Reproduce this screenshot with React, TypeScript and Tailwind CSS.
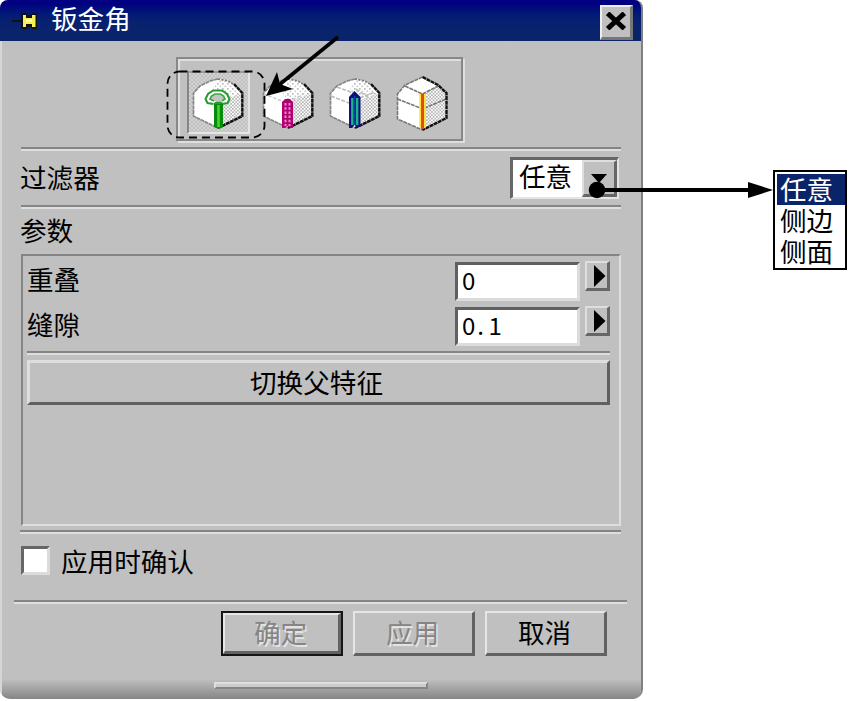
import type { ReactNode } from 'react';

const listItems = ["任意", "侧边", "侧面"];

const params = [
  { label: "重叠", value: "0" },
  { label: "缝隙", value: "0.1" },
];

function Divider({ className = "" }: { className?: string }) {
  return <div className={`h-[4px] shrink-0 border-t-2 border-b-2 border-t-[#858585] border-b-[#dedede] ${className}`}></div>;
}

// rounded sheet metal corner, the drawing in front of it is passed as children
function Cube({ children }: { children: ReactNode }) {
  return (
    <svg viewBox="0 0 52 54" className="w-[52px] h-[54px] shrink-0">
      <path d="M1.5 15 L8 8 L18 3 L26 1 L35 3 L44 8 L50 15 V38 L26 50 L1.5 38 Z" fill="#fff" />
      <path d="M26 24 L50 14 V38 L26 50 Z" fill="url(#dither)" />
      <path d="M26 1 L35 3 L44 8 L50 15 L27 24 L20 14 Z" fill="url(#ditherLight)" />
      <path d="M26 1 L18 3 L8 8 L1.5 15 V38 L26 50" fill="none" stroke="#858585" strokeWidth="1.7" strokeDasharray="4 0.6" />
      <path d="M26 1 L36 3 L44 8" fill="none" stroke="#777" strokeWidth="1.7" strokeDasharray="2 1.5" />
      <path d="M42 6 L50.3 15 V38 L26 50" fill="none" stroke="#111" strokeWidth="2.4" strokeDasharray="4 0.5" />
      {children}
    </svg>
  );
}

function DialogButton({ children, primary, disabled }: { children: ReactNode; primary?: boolean; disabled?: boolean }) {
  return (
    <div className={`w-[122px] h-[45px] ${primary ? "border-2 border-[#151515]" : ""}`}>
      <button
        className={`w-full h-full flex items-center justify-center pr-[2px] pb-[2px] border-t-2 border-l-2 border-r-[3px] border-b-[3px] border-t-[#e6e6e6] border-l-[#e6e6e6] border-r-[#626262] border-b-[#626262] ${disabled ? "text-[#858585] [text-shadow:1.5px_1.5px_0_#e4e4e4]" : "text-black"}`}
      >
        {children}
      </button>
    </div>
  );
}

export default function App() {
  return (
    <div className="relative flex w-[855px] h-[701px] bg-white overflow-hidden text-black text-[26.6px] leading-[32px] font-normal [font-family:'Noto_Sans_CJK_SC',sans-serif]">
      <svg className="absolute w-0 h-0">
        <defs>
          <pattern id="dither" width="3.34" height="3.34" patternUnits="userSpaceOnUse">
            <rect width="3.34" height="3.34" fill="#fff" />
            <rect width="1.67" height="1.67" fill="#b5b5b5" />
            <rect x="1.67" y="1.67" width="1.67" height="1.67" fill="#b5b5b5" />
          </pattern>
          <pattern id="ditherLight" width="5" height="5" patternUnits="userSpaceOnUse">
            <rect width="5" height="5" fill="#fff" />
            <rect width="1.67" height="1.67" fill="#bbb" />
            <rect x="2.5" y="2.5" width="1.67" height="1.67" fill="#ccc" />
          </pattern>
        </defs>
      </svg>

      {/* Dialog */}
      <div className="w-[643px] h-[699px] shrink-0 flex flex-col bg-[#c0c0c0] rounded-t-[8px] rounded-b-[10px] overflow-hidden border-r-2 border-r-[#808080]">
        <div className="h-[41px] shrink-0 flex items-center bg-gradient-to-b from-[#000080] from-10% via-[#08216f] via-50% to-[#0a246a] text-white">
          <svg viewBox="0 0 25 18" className="w-[25px] h-[18px] ml-[12px]">
            <path d="M0 9H10" stroke="#111" strokeWidth="2" />
            <path d="M9 1h5.5l2 2h2l2-2H25v16h-4.5l-2-2h-2l-2 2H9Z" fill="#111" />
            <path d="M11 3h3v3h6V3h3.500v12H20v-3h-6v3h-3Z" fill="#f4ef57" />
            <path d="M14 7.5h6v2h-6Z" fill="#fffbc0" />
          </svg>
          <span className="ml-[14px] -mt-[5px]">钣金角</span>
          <button className="ml-auto mr-[8px] mt-[4px] w-[33px] h-[35px] flex items-center justify-center bg-[#c0c0c0] border-t-2 border-l-2 border-r-[3px] border-b-[3px] border-t-[#eee] border-l-[#eee] border-r-[#777] border-b-[#777]">
            <svg viewBox="0 0 20 18" className="w-[20px] h-[18px] mb-[2px]">
              <path d="M3.5 3 L16.5 15 M16.5 3 L3.5 15" stroke="#000" strokeWidth="5" strokeLinecap="square" />
            </svg>
          </button>
        </div>

        <div className="flex-1 flex flex-col border-l-2 border-l-[#d6d6d6] bg-[linear-gradient(to_bottom,#c0c0c0_638px,#858585_658px)]">
          <div className="w-[287px] h-[84px] mt-[16px] ml-[174px] p-[2px] border-2 border-[#888] shadow-[inset_2px_2px_0_#dedede,2px_2px_0_#dedede] flex">
            <div className="ml-[7px] mt-[10px] w-[63px] h-[63px] pl-[3px] pt-[5px] border-2 border-t-[#999] border-l-[#858585] border-r-[#e4e4e4] border-b-[#e4e4e4] bg-[repeating-conic-gradient(#c0c0c0_0_25%,#d2d2d2_0_50%)] bg-[length:4px_4px]">
              <Cube>
                <path d="M21.5 26 L15.5 25 L13.5 21 L16 16 L21 12.5 H30 L35 16 L37.5 21 L35.5 25 L30 26" fill="#fff" stroke="#239b2d" strokeWidth="2" />
                <path d="M22 23 L18 21 L19.5 18 L23 16 H28.5 L31.5 18 L33 21 L30 23" fill="#c4c4c4" stroke="#35aa3d" strokeWidth="1.7" />
                <path d="M22 29 V25 L24 23.5 H29 L31 25 V29" fill="#239b2d" />
                <path d="M22 26 H31 V49 L26.5 51 L22 49 Z" fill="#078b0c" />
                <path d="M26.5 27 V49" stroke="#4bd22c" strokeWidth="2.6" />
              </Cube>
            </div>
            <div className="ml-[12px] mt-[17px] flex gap-[15px]">
              <Cube>
                <path d="M2 16 L20 23 M26 15 V23 M31 22 L43 15" fill="none" stroke="#c8c8c8" strokeWidth="1.5" strokeDasharray="3 2" />
                <path d="M20 24 L23 21 H28 L31 24 V50 H28 L25.5 48 L23 50 H20 Z" fill="#b00078" />
                <path d="M23.5 25 V48 M27.5 25 V48" stroke="#f58ab0" strokeWidth="2" strokeDasharray="2.5 1.7" />
              </Cube>
              <Cube>
                <path d="M2 18 L20 25 M8 9 L24 15 M31 20 L46 14 M27 11 L40 20" fill="none" stroke="#bbb" strokeWidth="1.6" strokeDasharray="4 1.5" />
                <path d="M20 19 L25.5 13 L31.5 19 V49 H28 L25.5 47 L23 50 H20 Z" fill="#10107c" />
                <path d="M23.3 20 V47 M28.2 20 V47" stroke="#16b58a" strokeWidth="2.4" />
                <path d="M25.7 18 V47" stroke="#0a3fa0" strokeWidth="1.6" />
              </Cube>
              <svg viewBox="0 0 53 56" className="w-[53px] h-[56px] -mt-[2px]">
                <path d="M26.5 1 L42 9 L50 16 V42 L26.5 54 L1.5 43 V18 L9 9 Z" fill="#fff" />
                <path d="M26.5 18 L43 9 L51 17 V42 L26.5 54 Z" fill="url(#dither)" />
                <path d="M26.5 1 L9 9 L1.5 18 V43 L26.5 54 M9 10 L26.5 18 L42 10 M1.5 23 L26.5 33 L50 23" fill="none" stroke="#777" strokeWidth="1.6" strokeDasharray="4 0.8" />
                <path d="M26.5 1 L42 9 L50.5 17 V42 L26.5 54" fill="none" stroke="#111" strokeWidth="2.4" strokeDasharray="4 0.6" />
                <path d="M26.5 18 V52" stroke="#ffe23b" strokeWidth="6.5" />
                <path d="M26.5 18 V53" stroke="#e44b14" strokeWidth="3" />
              </svg>
            </div>
          </div>

          <Divider className="mt-[6px] ml-[19px] mr-[20px]" />

          <div className="h-[54px] shrink-0 flex items-center justify-between pl-[18px] pr-[22px]">
            <span className="pb-[3px]">过滤器</span>
            <div className="w-[109px] h-[42px] flex border-t-[3px] border-l-[3px] border-r-2 border-b-2 border-t-[#666] border-l-[#666] border-r-[#e4e4e4] border-b-[#e4e4e4] bg-white">
              <span className="w-[69px] pl-[6px]">任意</span>
              <div className="flex-1 flex justify-center pt-[12px] bg-[#c0c0c0] border-t-2 border-l-2 border-r-[3px] border-b-[3px] border-t-[#dedede] border-l-[#dedede] border-r-[#666] border-b-[#666]">
                <svg viewBox="0 0 16 10" className="w-[16px] h-[10px]">
                  <path d="M0 0 H16 L8 9 Z" />
                </svg>
              </div>
            </div>
          </div>

          <Divider className="ml-[19px] mr-[20px]" />

          <div className="ml-[18px] mt-[5px] h-[40px] leading-[32px]">参数</div>

          {/* Parameters group */}
          <div className="ml-[19px] mr-[20px] h-[272px] shrink-0 pl-[4px] pr-[9px] pt-[6px] border-2 border-t-[#858585] border-l-[#858585] border-r-[#dedede] border-b-[#dedede]">
            {params.map((param) => (
              <div key={param.label} className="h-[45px] flex items-start">
                <span className="mt-px">{param.label}</span>
                <div className="ml-auto w-[125px] h-[39px] pl-[4px] bg-white border-[3px] border-t-[#606060] border-l-[#606060] border-r-[#dcdcdc] border-b-[#dcdcdc] flex text-[24px] leading-[30px]">
                  {param.value.split("").map((char, i) => (
                    <span key={i} className={`w-[13.3px] ${char === "." ? "pl-[2px]" : ""}`}>{char}</span>
                  ))}
                </div>
                <div className="ml-[5px] w-[25px] h-[30px] -mt-px flex items-center pl-[6px] border-t-2 border-l-2 border-r-[3px] border-b-[3px] border-t-[#dedede] border-l-[#dedede] border-r-[#666] border-b-[#666]">
                  <svg viewBox="0 0 13 22" className="w-[13px] h-[22px]">
                    <path d="M1 0 L12.5 11 L1 22 Z" />
                  </svg>
                </div>
              </div>
            ))}
            <Divider className="-mt-px" />
            <button className="mt-[5px] w-full h-[45px] flex items-center justify-center pr-[4px] pb-[2px] border-[3px] border-t-[#dedede] border-l-[#dedede] border-r-[#606060] border-b-[#606060]">
              切换父特征
            </button>
          </div>

          <Divider className="mt-[4px] ml-[18px] mr-[20px]" />

          <div className="h-[66px] shrink-0 flex pt-[12px] pl-[19px]">
            <div className="w-[29px] h-[29px] bg-white border-[3px] border-t-[#666] border-l-[#666] border-r-[#dcdcdc] border-b-[#dcdcdc]"></div>
            <span className="ml-[11px] -mt-px">应用时确认</span>
          </div>

          <Divider className="ml-[12px] mr-[14px]" />

          <div className="mt-[7px] ml-[219px] flex gap-[10px]">
            <DialogButton primary disabled>确定</DialogButton>
            <DialogButton disabled>应用</DialogButton>
            <DialogButton>取消</DialogButton>
          </div>

          <div className="mt-[26px] ml-[212px] w-[214px] h-[7px] bg-[#ccc] border-2 border-t-[#dedede] border-l-[#dedede] border-r-[#858585] border-b-[#858585]"></div>
        </div>
      </div>

      {/* Opened list of the filter */}
      <div className="ml-[130px] mt-[170px] w-[74px] h-[100px] shrink-0 bg-white border-2 border-black p-[2px] pr-0">
        {listItems.map((item, i) => (
          <div key={item} className={`h-[31px] leading-[30px] pl-[3px] ${i === 0 ? "bg-[#0a246a] text-white" : ""}`}>{item}</div>
        ))}
      </div>

      {/* Callouts */}
      <svg viewBox="0 0 855 701" className="absolute inset-0 w-[855px] h-[701px] pointer-events-none">
        <rect x="167.5" y="71.5" width="97" height="66" rx="12" fill="none" stroke="#000" strokeWidth="1.8" strokeDasharray="8 5" />
        <path d="M338 37 L279 85" stroke="#000" strokeWidth="3.6" />
        <path d="M266 96 L277 72 L280 84 L293 89 Z" />
        <path d="M597 190 H752" stroke="#000" strokeWidth="4" />
        <circle cx="597" cy="190" r="8.3" />
        <path d="M748 182 L773 190 L748 198 Z" />
      </svg>
    </div>
  );
}
